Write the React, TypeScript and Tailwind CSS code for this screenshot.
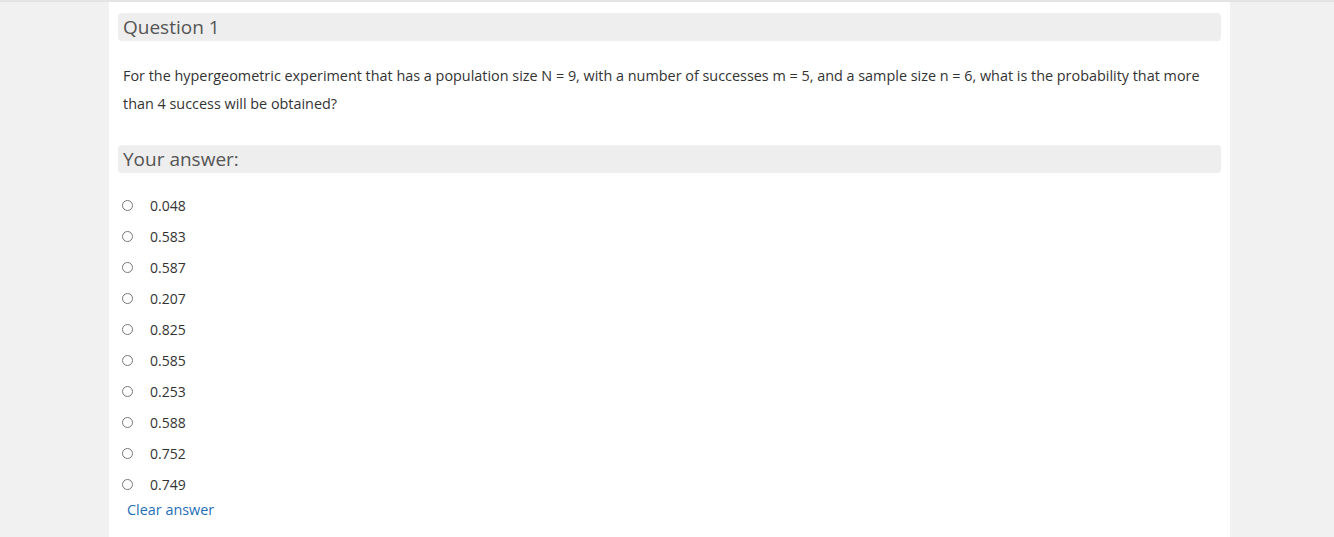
import React from "react";

const options = ["0.048", "0.583", "0.587", "0.207", "0.825", "0.585", "0.253", "0.588", "0.752", "0.749"];

export default function App() {
  return (
    <div className="min-h-[537px] bg-[#f1f1f1] font-['Open_Sans',sans-serif]">
      <div className="h-[2px] bg-[#e4e4e4]" />
      <div className="ml-[109px] w-[1121px] bg-white px-[9px] pt-[11px] pb-[20px]">
        <div className="h-[28px] rounded-[4px] bg-[#eeeeee] pl-[5px] text-[19px] leading-[28px] text-[#555]">
          Question 1
        </div>
        <div className="mt-[21px] px-[5px] text-[14.4px] leading-[28px] text-[#333]">
          For the hypergeometric experiment that has a population size N = 9, with a number of successes m = 5, and a sample size n = 6, what is the probability that more than 4 success will be obtained?
        </div>
        <div className="mt-[27px] h-[28px] rounded-[4px] bg-[#eeeeee] pl-[5px] text-[19px] leading-[28px] text-[#555]">
          Your answer:
        </div>
        <div className="mt-[17px] flex flex-col">
          {options.map((o) => (
            <div key={o} className="flex h-[31px] items-center">
              <span className="ml-[4px] box-border h-[11px] w-[11px] rounded-full border border-[#777] bg-white" />
              <span className="ml-[17px] text-[14px] text-[#333]">{o}</span>
            </div>
          ))}
        </div>
        <div className="ml-[9px] text-[14.4px] leading-[20px] text-[#1f6fb5]">Clear answer</div>
      </div>
    </div>
  );
}
